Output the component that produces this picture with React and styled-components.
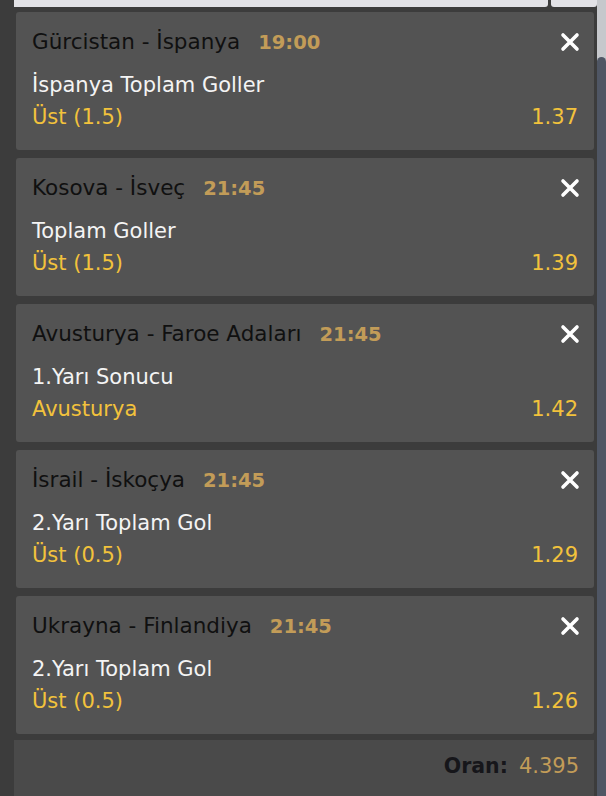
import React from 'react';
import styled, { createGlobalStyle } from 'styled-components';

const GlobalStyle = createGlobalStyle`
  html, body {
    margin: 0;
    padding: 0;
    background: #3c3c3c;
    overflow: hidden;
  }
  * { box-sizing: border-box; }
`;

const bets = [
  { match: 'Gürcistan - İspanya', time: '19:00', market: 'İspanya Toplam Goller', pick: 'Üst (1.5)', odd: '1.37' },
  { match: 'Kosova - İsveç', time: '21:45', market: 'Toplam Goller', pick: 'Üst (1.5)', odd: '1.39' },
  { match: 'Avusturya - Faroe Adaları', time: '21:45', market: '1.Yarı Sonucu', pick: 'Avusturya', odd: '1.42' },
  { match: 'İsrail - İskoçya', time: '21:45', market: '2.Yarı Toplam Gol', pick: 'Üst (0.5)', odd: '1.29' },
  { match: 'Ukrayna - Finlandiya', time: '21:45', market: '2.Yarı Toplam Gol', pick: 'Üst (0.5)', odd: '1.26' },
];

const Frame = styled.div`
  display: flex;
  width: 606px;
  height: 796px;
  background: #3c3c3c;
  font-family: 'DejaVu Sans', Verdana, sans-serif;
  font-size: 21px;
  overflow: hidden;
`;

const Slip = styled.div`
  flex: 1;
  display: flex;
  flex-direction: column;
  padding-left: 14px;
`;

const TopBar = styled.div`
  display: flex;
  height: 7px;
  margin-right: -3px;
`;

const TopPiece = styled.div`
  flex: ${(p) => p.grow};
  background: #e2e2e6;
  border-bottom-left-radius: ${(p) => (p.first ? '0' : '3px')};
  border-bottom-right-radius: 3px;
  margin-left: ${(p) => (p.first ? '0' : '3px')};
`;

const List = styled.div`
  display: flex;
  flex-direction: column;
  gap: 8px;
  padding: 5px 0 0 2px;
`;

const Card = styled.div`
  height: 138px;
  background: #535353;
  border-radius: 3px;
  padding: 14px 16px 0 16px;
  display: flex;
  flex-direction: column;
`;

const Row = styled.div`
  display: flex;
  align-items: center;
  justify-content: space-between;
`;

const MatchLine = styled.div`
  display: flex;
  align-items: baseline;
  gap: 18px;
  height: 32px;
  line-height: 32px;
`;

const Match = styled.span`
  color: #101010;
  font-size: 21.5px;
`;

const Time = styled.span`
  color: #c29c58;
  font-weight: bold;
  font-size: 19.5px;
`;

const Market = styled.div`
  color: #f4f4f4;
  line-height: 30px;
  margin-top: 12px;
`;

const Pick = styled.span`
  color: #f2c23c;
  line-height: 32px;
  margin-top: 1px;
`;

const Odd = styled.span`
  color: #f2c23c;
  line-height: 32px;
  margin-top: 1px;
`;

const Close = styled.button`
  border: none;
  background: none;
  padding: 0;
  margin-right: -4px;
  width: 24px;
  height: 24px;
  display: flex;
  align-items: center;
  justify-content: center;
  cursor: pointer;
`;

const Total = styled.div`
  flex: 1;
  margin-top: 6px;
  background: #4a4a4a;
  display: flex;
  justify-content: flex-end;
  align-items: flex-start;
  gap: 11px;
  padding: 14px 15px 0 0;
`;

const TotalLabel = styled.span`
  color: #16161a;
  font-weight: bold;
  font-size: 20.5px;
`;

const TotalValue = styled.span`
  color: #c29c58;
`;

const Scrollbar = styled.div`
  width: 9px;
  margin-left: 3px;
  background: #c6c8cc;
  display: flex;
  flex-direction: column;
  padding-top: 57px;
`;

const Thumb = styled.div`
  flex: 1;
  background: #4f5664;
  border-radius: 5px 5px 0 0;
`;

const CloseIcon = () => (
  <svg width="20" height="20" viewBox="0 0 20 20">
    <path d="M3 3 L17 17 M17 3 L3 17" stroke="#ffffff" strokeWidth="3.6" strokeLinecap="round" />
  </svg>
);

export default function App() {
  return (
    <Frame>
      <GlobalStyle />
      <Slip>
        <TopBar>
          <TopPiece first grow={533} />
          <TopPiece grow={46} />
        </TopBar>
        <List>
          {bets.map((b, i) => (
            <Card key={i}>
              <Row>
                <MatchLine>
                  <Match>{b.match}</Match>
                  <Time>{b.time}</Time>
                </MatchLine>
                <Close aria-label="Kaldır">
                  <CloseIcon />
                </Close>
              </Row>
              <Market>{b.market}</Market>
              <Row>
                <Pick>{b.pick}</Pick>
                <Odd>{b.odd}</Odd>
              </Row>
            </Card>
          ))}
        </List>
        <Total>
          <TotalLabel>Oran:</TotalLabel>
          <TotalValue>4.395</TotalValue>
        </Total>
      </Slip>
      <Scrollbar>
        <Thumb />
      </Scrollbar>
    </Frame>
  );
}
